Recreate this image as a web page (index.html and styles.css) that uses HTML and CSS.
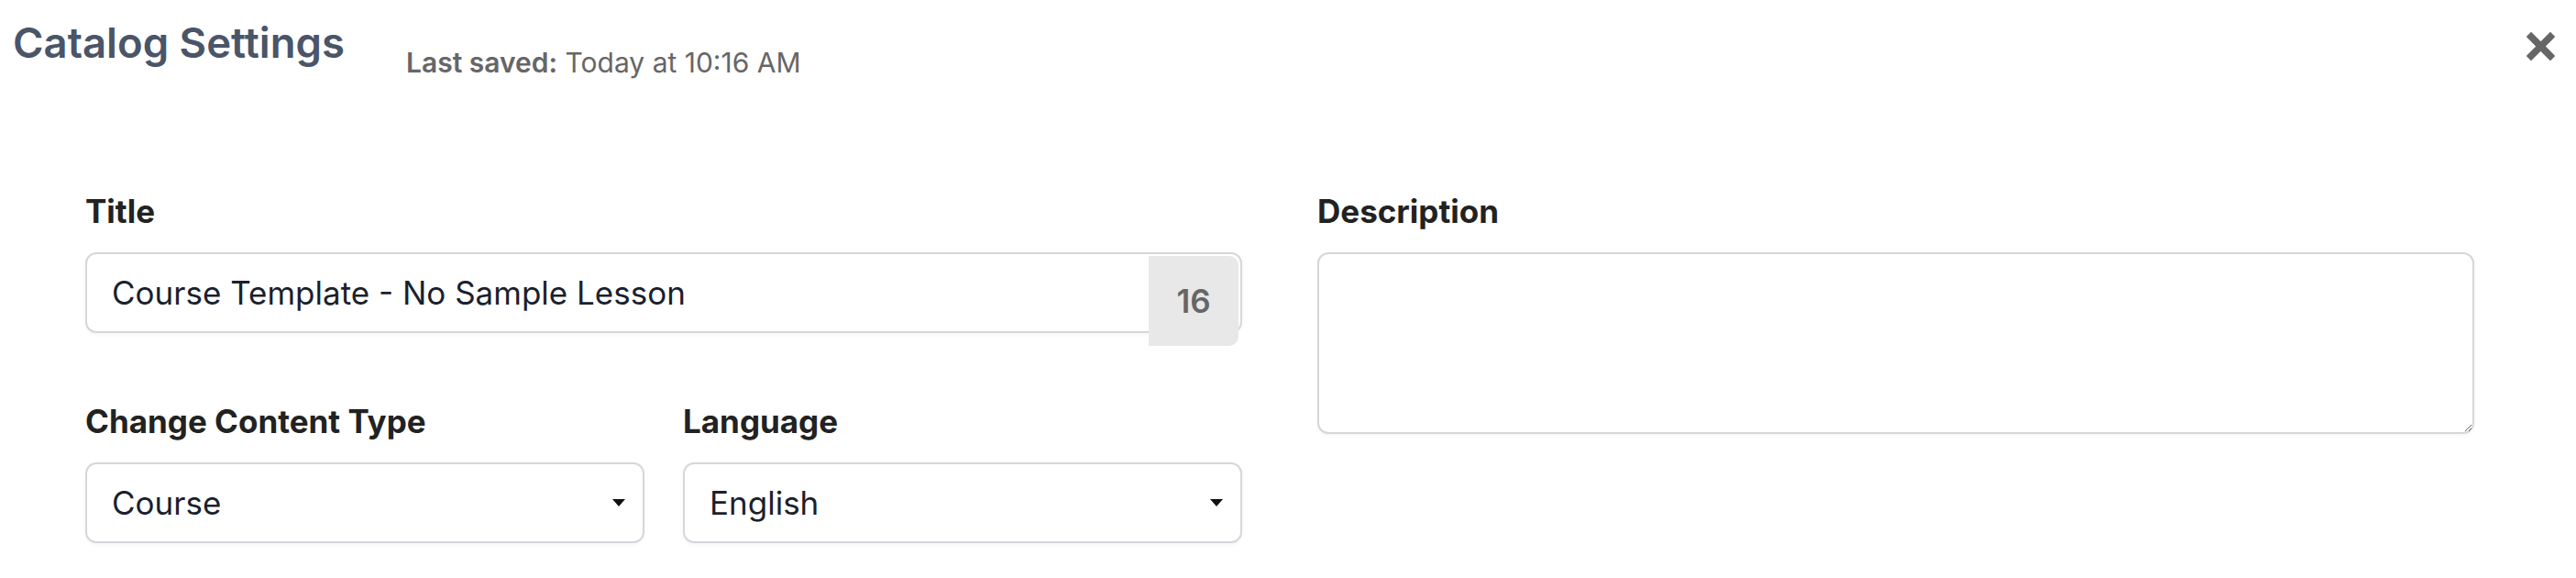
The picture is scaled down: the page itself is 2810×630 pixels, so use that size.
FILE: index.html
```html
<!DOCTYPE html>
<html lang="en">
<head>
	<meta charset="UTF-8">
	<title>Catalog Settings</title>
	<link rel="stylesheet" href="styles.css">
</head>
<body>
	<div class="header">
		<h1 class="header-title">Catalog Settings</h1>
		<div class="saved"><b>Last saved:</b> Today at 10:16 AM</div>
		<span class="close">
			<svg width="31" height="31" viewBox="0 0 31 31">
				<path d="M5 5 L26 26 M26 5 L5 26" stroke="#666" stroke-width="7.5" stroke-linecap="square" fill="none"/>
			</svg>
		</span>
	</div>
	<div class="form">
		<div class="col">
			<div class="field">
				<label class="label">Title</label>
				<div class="input-wrap">
					<input class="input" type="text" value="Course Template - No Sample Lesson">
					<span class="count">16</span>
				</div>
			</div>
			<div class="row">
				<div class="field">
					<label class="label">Change Content Type</label>
					<div class="select-wrap">
						<select class="input select">
							<option>Course</option>
						</select>
					</div>
				</div>
				<div class="field">
					<label class="label">Language</label>
					<div class="select-wrap">
						<select class="input select">
							<option>English</option>
						</select>
					</div>
				</div>
			</div>
		</div>
		<div class="col">
			<div class="field">
				<label class="label">Description</label>
				<textarea class="input area"></textarea>
			</div>
		</div>
	</div>
</body>
</html>
```

FILE: styles.css
```css
*{
	margin: 0;
	padding: 0;
	box-sizing: border-box;
}
body{
	background: #fff;
	font-family: Inter, "Noto Sans", sans-serif;
	color: #222;
	width: 2810px;
	height: 630px;
	overflow: hidden;
}
.header{
	display: flex;
	align-items: flex-start;
	padding: 25px 23px 0 14px;
}
.header-title{
	font-size: 45.5px;
	line-height: 44px;
	font-weight: 600;
	color: #4a5568;
}
.saved{
	margin: 29px 0 0 67px;
	font-size: 30px;
	line-height: 28px;
	color: #666;
	flex: 1;
}
.saved b{
	font-weight: 600;
}
.close{
	margin-top: 10px;
	width: 31px;
	height: 31px;
	cursor: pointer;
}
.close svg{
	display: block;
}
.form{
	display: grid;
	grid-template-columns: 1fr 1fr;
	column-gap: 82px;
	padding: 133px 111px 0 93px;
}
.row{
	display: grid;
	grid-template-columns: 1fr 1fr;
	column-gap: 42px;
	margin-top: 81px;
}
.label{
	display: block;
	font-size: 35px;
	line-height: 30px;
	font-weight: 700;
	color: #222;
	margin-bottom: 30px;
}
.input{
	display: block;
	width: 100%;
	height: 88px;
	border: 2px solid #d6d6dc;
	border-radius: 12px;
	box-shadow: 0 2px 4px rgba(0,0,0,.04);
	padding: 0 27px;
	font-family: Inter, "Noto Sans", sans-serif;
	font-size: 35px;
	color: #1b1f2e;
	background: #fff;
	outline: none;
}
.input-wrap,
.select-wrap{
	position: relative;
}
.count{
	position: absolute;
	top: 4px;
	right: 4px;
	width: 98px;
	height: 98px;
	background: #e8e8e8;
	border-radius: 0 10px 10px 0;
	display: flex;
	align-items: center;
	justify-content: center;
	font-size: 35px;
	font-weight: 600;
	color: #666;
}
.select{
	appearance: none;
	-webkit-appearance: none;
}
.select-wrap::after{
	content: "";
	position: absolute;
	right: 21px;
	top: 40px;
	border-left: 7.5px solid transparent;
	border-right: 7.5px solid transparent;
	border-top: 8px solid #111;
	pointer-events: none;
}
.area{
	height: 198px;
	padding: 20px 27px;
	resize: both;
}
```
